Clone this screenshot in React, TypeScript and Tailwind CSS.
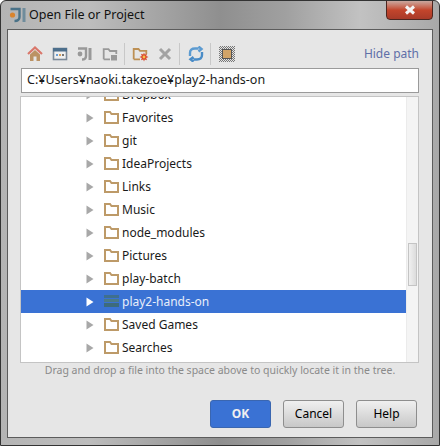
const font = { fontFamily: '"Noto Sans", "DejaVu Sans", sans-serif' };

function Folder({ dark = false }: { dark?: boolean }) {
  if (dark) {
    return (
      <svg width="15" height="13" viewBox="0 0 15 13" className="shrink-0">
        <rect x="0" y="0" width="15" height="3" fill="#3f6f8f" />
        <rect x="0" y="4" width="15" height="3" fill="#4a7a88" />
        <rect x="0" y="8" width="15" height="4" fill="#3d6b7c" />
      </svg>
    );
  }
  return (
    <svg width="15" height="13" viewBox="0 0 15 13" className="shrink-0">
      <path d="M1 12V1H6L7.5 3H14V12Z" fill="#fff" stroke="#bd9a68" strokeWidth="2" />
    </svg>
  );
}

function Row({ label, selected = false }: { label: string; selected?: boolean }) {
  return (
    <div className={`h-[23px] flex items-center shrink-0 ${selected ? "bg-[#3a72d4] text-[#e8eefa]" : "text-[#1a1a1a]"}`}>
      <svg width="8" height="10" viewBox="0 0 8 10" className="ml-[65px] shrink-0">
        <path d="M0.5 0.5L7.5 5L0.5 9.5Z" fill={selected ? "#ffffff" : "#a8a8a8"} />
      </svg>
      <div className="ml-[10px] flex items-center gap-[3px]">
        <Folder dark={selected} />
        <span className="text-[12px] leading-none">{label}</span>
      </div>
    </div>
  );
}

function Sep() {
  return <div className="w-px h-[22px] bg-[#c8c8c8] mx-[6px] shrink-0" />;
}

function Toolbar() {
  return (
    <div className="flex items-center h-[24px] pl-[6px]">
      <div className="flex items-center gap-[9px]">
        <svg width="16" height="16" viewBox="0 0 16 16">
          <path d="M1 8L8 1.5L15 8" fill="none" stroke="#d9776b" strokeWidth="2.2" />
          <path d="M3 8.5L8 4L13 8.5V15H9.5V10.5H6.5V15H3Z" fill="#bb9264" />
        </svg>
        <svg width="16" height="16" viewBox="0 0 16 16">
          <rect x="1.5" y="2.5" width="13" height="11" fill="#f0f0f0" stroke="#7c8a99" strokeWidth="1.6" />
          <rect x="1" y="2" width="14" height="3.5" fill="#4d6f8c" />
          <rect x="4" y="8" width="2" height="2" fill="#6b9fd4" />
          <rect x="7" y="8" width="2" height="2" fill="#d9a05b" />
          <rect x="10" y="8" width="2" height="2" fill="#777" />
        </svg>
        <svg width="16" height="16" viewBox="0 0 16 16">
          <circle cx="3" cy="8" r="2.4" fill="#999" />
          <path d="M1 2.5H9V10Q9 13.5 5 13.5" fill="none" stroke="#999" strokeWidth="2.4" />
          <path d="M13 2V14" stroke="#999" strokeWidth="3" />
        </svg>
        <svg width="16" height="16" viewBox="0 0 16 16">
          <path d="M1.7 13.3V3.2H6.5L8 5H14.3V8" fill="none" stroke="#999" strokeWidth="1.8" />
          <path d="M1.7 13.3H8" stroke="#999" strokeWidth="1.8" />
          <rect x="9" y="9" width="6" height="5.5" fill="#999" />
        </svg>
      </div>
      <Sep />
      <div className="flex items-center gap-[8px] ml-[1px]">
        <svg width="17" height="16" viewBox="0 0 17 16">
          <path d="M1.7 13.3V3H6.5L8 4.8H14.3V8M1.7 13.3H8" fill="none" stroke="#bd9054" strokeWidth="1.8" />
          <path d="M12 6.5L12.8 8.6L15 7.8L14.2 10L16.5 11L14.2 12L15 14.2L12.8 13.4L12 15.5L11.2 13.4L9 14.2L9.8 12L7.5 11L9.8 10L9 7.8L11.2 8.6Z" fill="#d9482b" />
          <circle cx="12" cy="11" r="1.4" fill="#f5c14a" />
        </svg>
        <svg width="16" height="16" viewBox="0 0 16 16">
          <path d="M3 3L13 13M13 3L3 13" stroke="#a3a3a3" strokeWidth="3" />
        </svg>
      </div>
      <Sep />
      <svg width="16" height="16" viewBox="0 0 16 16" className="ml-[2px]">
        <path d="M2 10V7Q2 2.5 7 2.5H10.5M10.5 0.5L13.5 3L10.5 5.5" fill="none" stroke="#5c9bd1" strokeWidth="2.4" />
        <path d="M14 6V9Q14 13.5 9 13.5H5.5M5.5 11L2.5 13.3L5.5 15.7" fill="none" stroke="#4a8cc7" strokeWidth="2.4" />
      </svg>
      <Sep />
      <div className="ml-[2px] w-[16px] h-[16px] bg-[repeating-conic-gradient(#777_0_25%,#e4e4e4_0_50%)] bg-[length:2px_2px] flex items-center justify-center">
        <div className="w-[10px] h-[10px] bg-[#d2a468] border border-[#555]" />
      </div>
      <span className="ml-auto text-[12px] text-[#5f6fa8]">Hide path</span>
    </div>
  );
}

function Btn({ label, primary = false, w }: { label: string; primary?: boolean; w: string }) {
  return (
    <button
      className={`h-[28px] ${w} rounded-[3px] border text-[12px] ${
        primary
          ? "bg-[#3a72d4] border-[#3a66b0] text-[#f0f0f0] font-bold"
          : "bg-gradient-to-b from-[#f0f0f0] to-[#c8c8c8] border-[#8e8e8e] text-black"
      }`}
    >
      {label}
    </button>
  );
}

const names = ["Favorites", "git", "IdeaProjects", "Links", "Music", "node_modules", "Pictures", "play-batch"];

export default function App() {
  return (
    <div style={font} className="w-[440px] h-[446px] overflow-hidden border border-[#333] rounded-t-[6px] flex flex-col px-[6px] pb-[7px] bg-[linear-gradient(to_right,#b4b4b4_0%,#bdbdbd_20%,#8f8f8f_50%,#a0a0a0_65%,#c2c2c2_82%,#a8a8a8_100%)]">
      <div className="relative h-[28px] shrink-0 flex items-center">
        <svg width="18" height="16" viewBox="0 0 18 16" className="ml-[2px] shrink-0">
          <circle cx="3.5" cy="8" r="2.6" fill="#d9842e" />
          <path d="M1.5 2H10.5V10Q10.5 14 5.5 14" fill="none" stroke="#4a7288" strokeWidth="2.4" />
          <path d="M15 1V15" stroke="#6f8c9c" strokeWidth="3" />
        </svg>
        <span className="ml-[2px] text-[12.5px] text-[#111]">Open File or Project</span>
        <div className="absolute right-0 top-[-1px] w-[47px] h-[20px] rounded-b-[4px] border border-[#4d2620] bg-gradient-to-b from-[#c9a79f] via-[#c3452c] to-[#a83a28] flex items-center justify-center">
          <svg width="12" height="10" viewBox="0 0 12 10">
            <path d="M2 1.5L10 8.5M10 1.5L2 8.5" stroke="#f4f4f4" strokeWidth="3" />
          </svg>
        </div>
      </div>
      <div className="flex-1 min-h-0 border border-[#5c5c5c] bg-[#e6e6e6] flex flex-col px-[13px] pt-[12px]">
        <Toolbar />
        <div className="mt-[2px] h-[25px] shrink-0 bg-white border border-[#9a9a9a] flex items-center pl-[5px] text-[12.5px] text-[#1a1a1a] whitespace-nowrap">
          C:¥Users¥naoki.takezoe¥play2-hands-on
        </div>
        <div className="mt-[3px] -ml-[1px] h-[267px] shrink-0 bg-white border border-[#c4c4c4] flex overflow-hidden">
          <div className="flex-1 flex flex-col min-w-0">
            <div className="h-[9px] flex items-end shrink-0 overflow-hidden">
              <Row label="Dropbox" />
            </div>
            {names.map((n) => (
              <Row key={n} label={n} />
            ))}
            <Row label="play2-hands-on" selected />
            <Row label="Saved Games" />
            <Row label="Searches" />
          </div>
          <div className="w-[12px] shrink-0 bg-[#f4f4f4] border-l border-[#ebebeb] pl-[1px] pr-[1px] pt-[146px]">
            <div className="h-[43px] bg-gradient-to-r from-[#f0f0f0] to-[#dcdcdc] border border-[#c4c4c4]" />
          </div>
        </div>
        <div className="h-[14px] text-center text-[10.5px] leading-[14px] text-[#8a8a8a] whitespace-nowrap">
          Drag and drop a file into the space above to quickly locate it in the tree.
        </div>
        <div className="mt-[23px] flex justify-end gap-[12px] pr-[2px]">
          <Btn label="OK" primary w="w-[61px]" />
          <Btn label="Cancel" w="w-[61px]" />
          <Btn label="Help" w="w-[61px]" />
        </div>
      </div>
    </div>
  );
}
